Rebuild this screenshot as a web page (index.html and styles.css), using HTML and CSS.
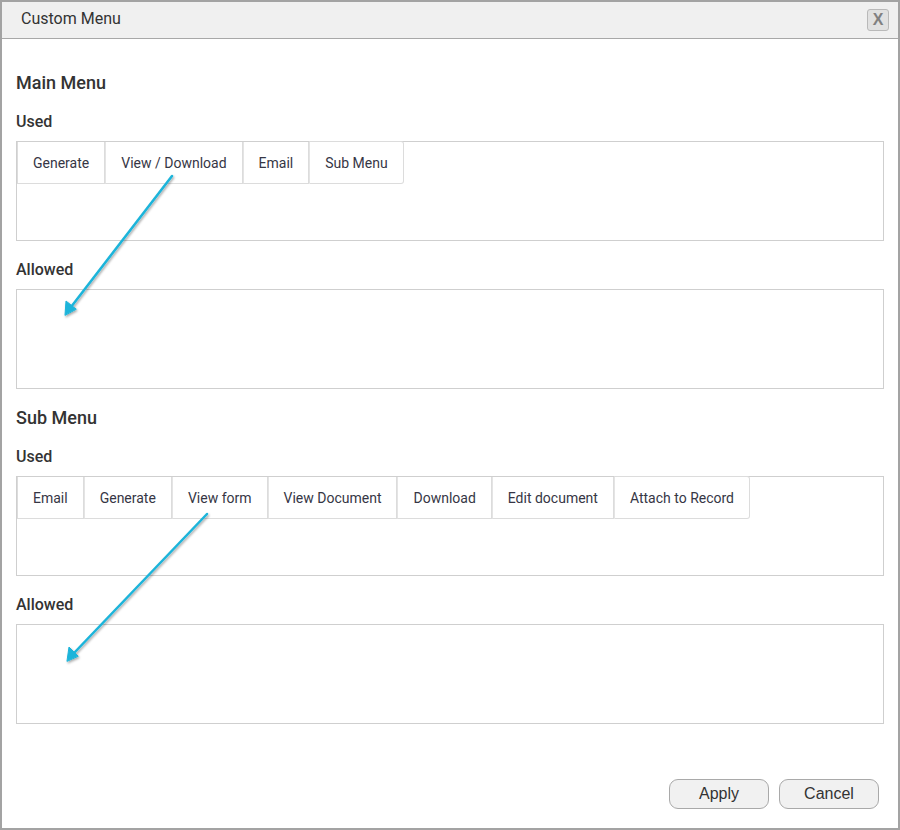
FILE: index.html
```html
<!DOCTYPE html>
<html>
<head>
<meta charset="utf-8">
<link rel="stylesheet" href="styles.css">
</head>
<body>
<div class="dialog">
  <div class="titlebar">
    <span class="title">Custom Menu</span>
    <button class="close">X</button>
  </div>
  <div class="content">
    <h2 class="heading">Main Menu</h2>
    <div class="label">Used</div>
    <div class="box">
      <div class="tabs">
        <div class="tab">Generate</div>
        <div class="tab">View / Download</div>
        <div class="tab">Email</div>
        <div class="tab">Sub Menu</div>
      </div>
    </div>
    <div class="label">Allowed</div>
    <div class="box"></div>

    <h2 class="heading">Sub Menu</h2>
    <div class="label">Used</div>
    <div class="box">
      <div class="tabs">
        <div class="tab">Email</div>
        <div class="tab">Generate</div>
        <div class="tab">View form</div>
        <div class="tab">View Document</div>
        <div class="tab">Download</div>
        <div class="tab">Edit document</div>
        <div class="tab">Attach to Record</div>
      </div>
    </div>
    <div class="label">Allowed</div>
    <div class="box"></div>

    <div class="footer">
      <button class="btn">Apply</button>
      <button class="btn">Cancel</button>
    </div>
  </div>
  <svg class="arrows" width="900" height="830" viewBox="0 0 900 830">
    <defs>
      <filter id="sh" x="-20%" y="-20%" width="140%" height="140%">
        <feDropShadow dx="1" dy="1.5" stdDeviation="1.2" flood-color="#000" flood-opacity="0.35"/>
      </filter>
    </defs>
    <g filter="url(#sh)" stroke="#1bb4da" fill="#1bb4da" stroke-width="2.5" stroke-linecap="round">
      <line x1="172" y1="176" x2="71" y2="307"/>
      <polygon points="65,315 66,301 76,309" stroke-width="1" stroke-linejoin="round"/>
      <line x1="207" y1="514" x2="74" y2="653"/>
      <polygon points="67,661 69,647 78,656" stroke-width="1" stroke-linejoin="round"/>
    </g>
  </svg>
</div>
</body>
</html>
```
FILE: styles.css
```css
* { box-sizing: border-box; }
html, body { margin: 0; padding: 0; background: #fff; }
body { font-family: Roboto, "Liberation Sans", sans-serif; color: #333; }

.dialog {
  position: relative;
  width: 900px;
  height: 830px;
  border: 2px solid #a3a3a3;
  background: #fff;
  display: flex;
  flex-direction: column;
}

.titlebar {
  height: 37px;
  background: #f0f0f0;
  border-bottom: 1px solid #a8a8a8;
  display: flex;
  align-items: center;
  justify-content: space-between;
  padding: 0 9px 3px 19px;
  flex-shrink: 0;
}
.title { font-size: 16px; color: #333; }
.close {
  width: 22px;
  height: 22px;
  border: 1px solid #b9b9b9;
  border-radius: 3px;
  background: #e1e1e1;
  color: #808080;
  font-family: "Liberation Sans", Arial, sans-serif;
  font-weight: bold;
  font-size: 16px;
  padding: 0;
  line-height: 20px;
  margin-top: 2px;
}

.content {
  flex: 1;
  padding: 34px 14px 19px 14px;
  display: flex;
  flex-direction: column;
}

.heading {
  margin: 0;
  font-size: 18px;
  font-weight: 500;
  line-height: 20px;
  color: #333;
}
.box + .heading { margin-top: 19px; }

.label {
  margin: 19px 0 9px;
  font-size: 16px;
  font-weight: 500;
  line-height: 20px;
  color: #333;
}

.box {
  height: 100px;
  border: 1px solid #cfcfcf;
  padding: 0;
}

.tabs { display: flex; }
.tab {
  height: 42px;
  padding: 0 15px;
  border: 1px solid #dcdcdc;
  border-top: none;
  font-size: 14px;
  color: #363645;
  display: flex;
  align-items: center;
}
.tab + .tab { border-left: 1px solid #e4e4e4; }
.tab:last-child { border-radius: 0 3px 3px 0; border-top: 1px solid #dcdcdc; margin-top: -1px; height: 43px; }

.footer {
  margin-top: auto;
  display: flex;
  justify-content: flex-end;
  gap: 10px;
  padding-right: 5px;
}
.btn {
  width: 100px;
  height: 30px;
  border: 1px solid #a9a9a9;
  border-radius: 9px;
  background: #f1f1f1;
  font-family: "Liberation Sans", Arial, sans-serif;
  font-size: 16px;
  color: #333;
  padding: 0;
}

.arrows {
  position: absolute;
  left: -2px;
  top: -2px;
  pointer-events: none;
}
```
